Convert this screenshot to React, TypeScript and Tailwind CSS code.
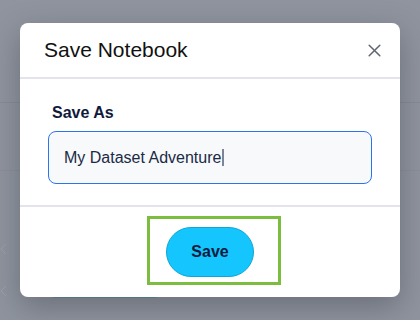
import React from "react";

export default function App() {
  return (
    <div
      className="relative w-[420px] h-[320px] overflow-hidden bg-[#8f949e]"
      style={{ fontFamily: '"Liberation Sans", Arial, sans-serif' }}
    >
      {/* dimmed page behind the overlay */}
      <div className="flex flex-col h-full">
        <div className="h-[103px] border-b border-[#868b95]" />
        <div className="h-[68px] border-b border-[#8a8f99]" />
        <div className="flex flex-1">
          <div className="w-[14px] flex flex-col items-center pt-[72px] gap-[30px] border-r border-[#8a96a4]">
            <svg width="8" height="12" viewBox="0 0 8 12" className="-ml-2">
              <path d="M7 1 L2 6 L7 11" fill="none" stroke="#9aa0a9" strokeWidth="1" />
            </svg>
            <svg width="8" height="12" viewBox="0 0 8 12" className="-ml-2">
              <path d="M7 1 L2 6 L7 11" fill="none" stroke="#9aa0a9" strokeWidth="1" />
            </svg>
          </div>
          <div className="flex-1 flex flex-col justify-end pb-[22px] pl-[38px]">
            <div className="w-[106px] h-[3px] rounded-b-md bg-[#5f8d9c]" />
          </div>
        </div>
      </div>

      {/* modal */}
      <div className="absolute inset-0 flex items-center justify-center">
        <div className="w-[380px] h-[274px] bg-white rounded-[8px] shadow-[0_10px_30px_rgba(40,44,55,0.35)] flex flex-col">
          <div className="flex items-center justify-between h-[56px] shrink-0 pl-6 pr-[19px] border-b-2 border-[#e4e4ec]">
            <span className="text-[21px] leading-6 text-[#111111]">Save Notebook</span>
            <svg width="13" height="13" viewBox="0 0 13 13">
              <path d="M1.2 1.2 L11.8 11.8 M11.8 1.2 L1.2 11.8" stroke="#5f6470" strokeWidth="1.5" strokeLinecap="round" />
            </svg>
          </div>
          <div className="flex flex-col shrink-0 px-7 pt-[25px] pb-[21px] border-b-2 border-[#e4e4ec]">
            <label className="ml-1 text-[16px] leading-[18px] font-bold text-[#111a3b]">Save As</label>
            <div className="mt-[9px] h-[53px] flex items-center pl-[15px] rounded-[8px] border border-[#2a74ee] bg-[#f7f9fb]">
              <span className="text-[16px] text-[#1b2a45]">My Dataset Adventure</span>
              <span className="ml-[1px] w-[1.5px] h-[17px] bg-[#7d8597]" />
            </div>
          </div>
          <div className="flex-1 flex justify-center pt-[9px]">
            <div className="ml-2 h-[69px] border-[3px] border-[#7bbd3e] pl-4 pr-6 pt-2 flex items-start">
              <button className="w-[88px] h-[50px] rounded-full bg-[#14c6fd] border border-[#10a7d6] text-[16px] font-bold text-[#0d1b3e]">
                Save
              </button>
            </div>
          </div>
        </div>
      </div>
    </div>
  );
}
